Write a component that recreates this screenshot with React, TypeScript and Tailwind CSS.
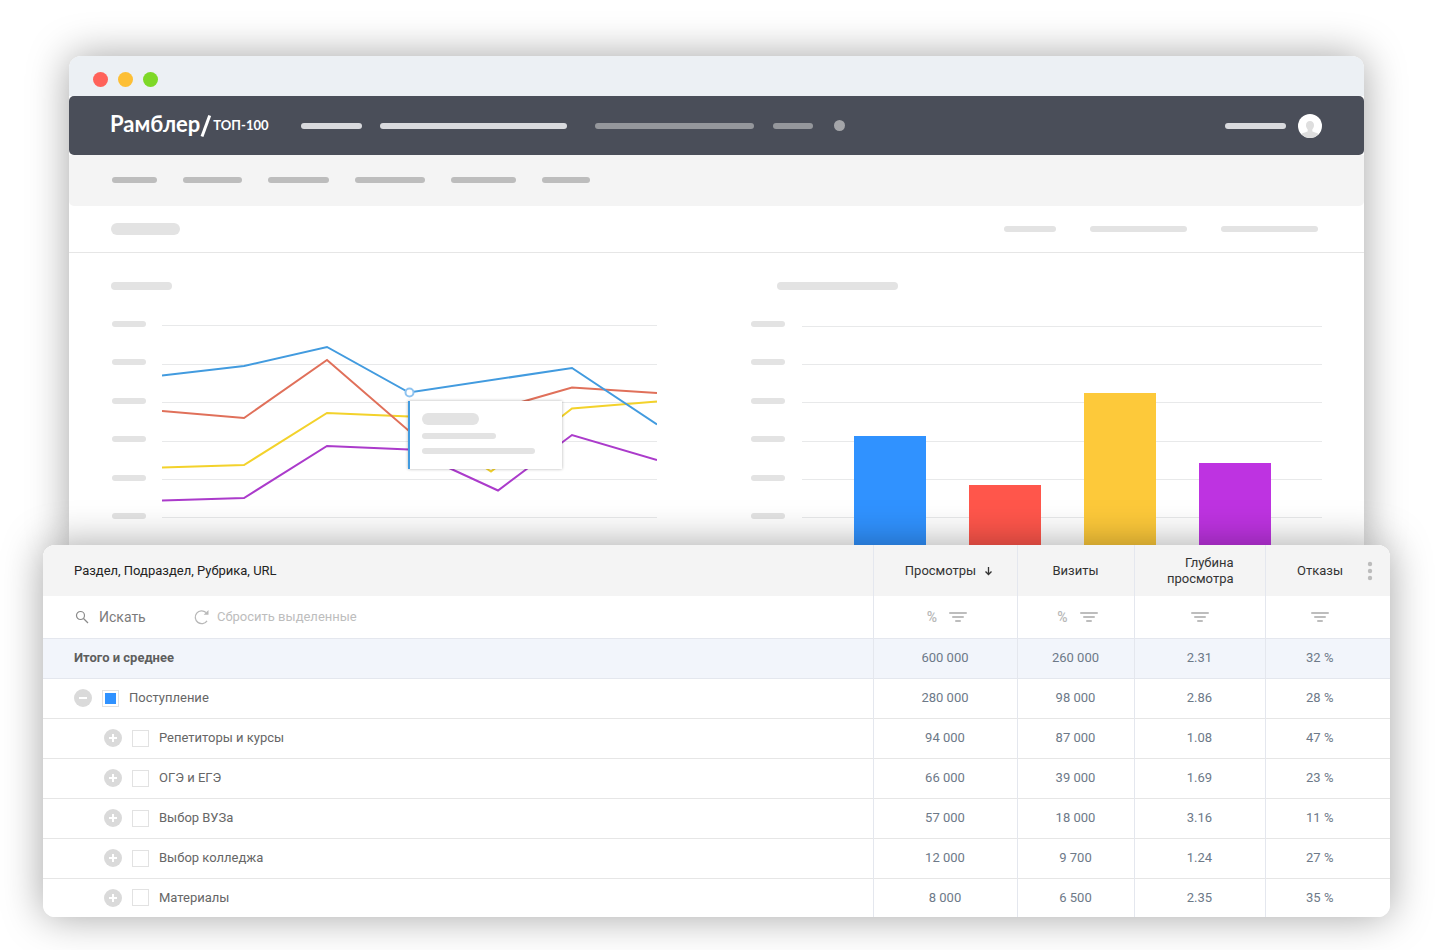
import { useState } from 'react';

const axisTicks = [0, 1, 2, 3, 4, 5];

const series = [
  { name: 'yellow', color: '#f3d22b', points: '0,142.5 82,140 165,88 247,91.5 329,146.5 410,83.5 495,76.5' },
  { name: 'red', color: '#e0705a', points: '0,86 82,93 165,35 247,106 335,84 410,62.5 495,68' },
  { name: 'purple', color: '#ab3bcb', points: '0,175.5 82,173 165,121 247,124.5 336,165.5 410,110 495,135' },
  { name: 'blue', color: '#429bdf', points: '0,50.5 82,41 165,22 247,67.5 410,43 495,99.5' },
];

const bars = [
  { x: 52, y: 111, color: '#3092ff' },
  { x: 167, y: 160, color: '#ff564b' },
  { x: 282, y: 68, color: '#fdc93a' },
  { x: 397, y: 138, color: '#be33e1' },
];

const rows = [
  { name: 'Поступление', values: ['280 000', '98 000', '2.86', '28 %'], parent: true },
  { name: 'Репетиторы и курсы', values: ['94 000', '87 000', '1.08', '47 %'], parent: false },
  { name: 'ОГЭ и ЕГЭ', values: ['66 000', '39 000', '1.69', '23 %'], parent: false },
  { name: 'Выбор ВУЗа', values: ['57 000', '18 000', '3.16', '11 %'], parent: false },
  { name: 'Выбор колледжа', values: ['12 000', '9 700', '1.24', '27 %'], parent: false },
  { name: 'Материалы', values: ['8 000', '6 500', '2.35', '35 %'], parent: false },
];

const totals = ['600 000', '260 000', '2.31', '32 %'];

function Bar({ className }: { className: string }) {
  return <span className={`block shrink-0 rounded-full ${className}`} />;
}

function AxisLabels() {
  return (
    <div className="flex h-[198px] w-[34px] shrink-0 flex-col justify-between">
      {axisTicks.map((tick) => (
        <Bar key={tick} className="h-1.5 w-full bg-[#e3e3e3]" />
      ))}
    </div>
  );
}

function GridLines({ width, top }: { width: number; top: number }) {
  const offsets = [top, 39, 77, 116, 154, 192];
  return (
    <g fill="#e8e9ea">
      {offsets.map((y) => (
        <rect key={y} x="0" y={y} width={width} height="1" />
      ))}
    </g>
  );
}

function LineChart() {
  return (
    <div>
      <Bar className="h-2 w-[61px] bg-[#e3e3e3]" />
      <div className="mt-[31px] flex gap-4 pl-px">
        <AxisLabels />
        <div className="relative mt-1 min-w-0 flex-1">
          <svg viewBox="0 0 495 220" preserveAspectRatio="none" className="block h-[220px] w-full">
            <GridLines width={495} top={0} />
            {series.map((line) => (
              <polyline key={line.name} points={line.points} fill="none" stroke={line.color} strokeWidth="2" />
            ))}
            <circle cx="247.5" cy="67.5" r="4" fill="#fff" stroke="#8ec3f0" strokeWidth="2" />
          </svg>
          {/* Tooltip of the highlighted point */}
          <div
            className="absolute top-[76px] flex h-[68px] w-[154px] flex-col border-l-2 border-[#429bdf] bg-white pt-3 pl-3 shadow-[0_0_3px_rgba(0,0,0,0.3)]"
            style={{ left: `${(246 / 495) * 100}%` }}
          >
            <Bar className="h-3 w-[57px] bg-[#e3e3e3]" />
            <Bar className="mt-2 h-1.5 w-[74px] bg-[#e3e3e3]" />
            <Bar className="mt-[9px] h-1.5 w-[113px] bg-[#e3e3e3]" />
          </div>
        </div>
      </div>
    </div>
  );
}

function BarChart() {
  return (
    <div>
      <Bar className="ml-[26px] h-2 w-[121px] bg-[#e3e3e3]" />
      <div className="mt-[31px] flex gap-[17px]">
        <AxisLabels />
        <svg viewBox="0 0 520 220" preserveAspectRatio="none" className="mt-1 block h-[220px] min-w-0 flex-1">
          <GridLines width={520} top={1} />
          {bars.map((bar) => (
            <rect key={bar.color} x={bar.x} y={bar.y} width="72" height={220 - bar.y} fill={bar.color} />
          ))}
        </svg>
      </div>
    </div>
  );
}

function FilterIcon() {
  return (
    <svg width="18" height="12" viewBox="0 0 18 12" fill="none" stroke="#bdbdbd" strokeWidth="2" strokeLinecap="round">
      <path d="M1 2h16M4 6h10M7 10h4" />
    </svg>
  );
}

function FilterControls({ percent }: { percent?: boolean }) {
  return (
    <div className={`flex items-center justify-center gap-3 ${percent ? 'pl-1' : ''}`}>
      {percent && (
        <button type="button" className="text-sm font-medium text-[#b8b8b8]">
          %
        </button>
      )}
      <button type="button" aria-label="Фильтр">
        <FilterIcon />
      </button>
    </div>
  );
}

function BrowserWindow() {
  return (
    <section className="mx-[26px] rounded-t-xl bg-white shadow-[0_0_40px_rgba(0,0,0,0.36)]">
      <div className="flex h-10 items-center gap-2.5 rounded-t-xl bg-[#ecf0f4] px-6 pt-1.5">
        <span className="size-[15px] rounded-full bg-[#ff625a]" />
        <span className="size-[15px] rounded-full bg-[#fdbf35]" />
        <span className="size-[15px] rounded-full bg-[#7ed827]" />
      </div>

      <header className="flex h-[59px] items-center rounded-[5px] bg-[#4a4e59] pr-[42px] pl-[41px]">
        <a href="#" className="flex w-[191px] shrink-0 items-center font-['Lato',sans-serif] text-white">
          <span className="pb-1 text-[22px] leading-6 font-bold">Рамблер</span>
          <svg width="12" height="22" viewBox="0 0 12 22" fill="none" stroke="#fff" strokeWidth="3">
            <path d="M9.700 .5 2 21.500" />
          </svg>
          <span className="ml-px text-[13px] font-bold">ТОП-100</span>
        </a>
        <nav className="flex items-center">
          <Bar className="h-1.5 w-[61px] bg-[#d9dade]" />
          <Bar className="ml-[18px] h-1.5 w-[187px] bg-[#d9dade]" />
          <Bar className="ml-7 h-1.5 w-[159px] bg-[#95979c]" />
          <Bar className="ml-[19px] h-1.5 w-10 bg-[#95979c]" />
          <Bar className="ml-[21px] size-[11px] bg-[#a4a5a9]" />
        </nav>
        <div className="ml-auto flex items-center gap-3">
          <Bar className="h-1.5 w-[61px] bg-[#d9dade]" />
          <svg width="24" height="24" viewBox="0 0 24 24">
            <circle cx="12" cy="12" r="12" fill="#fff" />
            <path
              d="M12 7c2.600 0 4 1.900 4 4.200 0 1.700-.7 3.200-1.700 4.200v1.900c0 .9 5 1.200 6.200 2.900A12 12 0 0 1 12 24a12 12 0 0 1-8.500-3.800c1.200-1.700 6.200-2 6.200-2.900v-1.900C8.700 14.400 8 12.900 8 11.200 8 8.900 9.400 7 12 7Z"
              fill="#dedede"
            />
          </svg>
        </div>
      </header>

      <div className="flex h-[51px] items-center gap-[26px] rounded-b-[5px] bg-[#f4f4f4] px-[43px] pb-px">
        <Bar className="h-1.5 w-[45px] bg-[#bdbdbd]" />
        <Bar className="h-1.5 w-[59px] bg-[#bdbdbd]" />
        <Bar className="h-1.5 w-[61px] bg-[#bdbdbd]" />
        <Bar className="h-1.5 w-[70px] bg-[#bdbdbd]" />
        <Bar className="h-1.5 w-[65px] bg-[#bdbdbd]" />
        <Bar className="h-1.5 w-12 bg-[#bdbdbd]" />
      </div>

      <div className="flex h-[47px] items-center gap-[34px] border-b border-[#e6e6e6] pr-[46px] pl-[42px]">
        <Bar className="mr-auto h-3 w-[69px] bg-[#e3e3e3]" />
        <Bar className="h-1.5 w-[52px] bg-[#e3e3e3]" />
        <Bar className="h-1.5 w-[97px] bg-[#e3e3e3]" />
        <Bar className="h-1.5 w-[97px] bg-[#e3e3e3]" />
      </div>

      <div className="grid grid-cols-[546fr_571fr] gap-[94px] px-[42px] pt-[29px]">
        <LineChart />
        <BarChart />
      </div>
    </section>
  );
}

function StatsTable() {
  const [selected, setSelected] = useState<string[]>(['Поступление']);

  const toggle = (name: string) => {
    setSelected((prev) => (prev.includes(name) ? prev.filter((item) => item !== name) : [...prev, name]));
  };

  return (
    <section className="relative overflow-hidden rounded-xl bg-white">
      <table className="w-full table-fixed border-collapse text-[13px] leading-4 text-[#6d7988]">
        <colgroup>
          <col />
          <col className="w-36" />
          <col className="w-[117px]" />
          <col className="w-[131px]" />
          <col className="w-[125px]" />
        </colgroup>
        <thead>
          <tr className="h-[51px] bg-[#f4f4f4] text-[#333]">
            <th className="pl-[31px] text-left font-normal text-[#222]">Раздел, Подраздел, Рубрика, URL</th>
            <th className="border-l border-[#e4e7ee] font-normal">
              <button type="button" className="inline-flex items-center gap-2 pl-2">
                Просмотры
                <svg width="9" height="10" viewBox="0 0 9 10" fill="none" stroke="#333" strokeWidth="1.3">
                  <path d="M4.500 1v7M1.500 5.500l3 3 3-3" />
                </svg>
              </button>
            </th>
            <th className="border-l border-[#e4e7ee] font-normal">Визиты</th>
            <th className="border-l border-[#e4e7ee] pr-[31px] text-right font-normal">
              Глубина
              <br />
              просмотра
            </th>
            <th className="border-l border-[#e4e7ee] font-normal">
              <div className="flex items-center justify-end gap-6 pr-[17px]">
                Отказы
                <button type="button" aria-label="Настройки">
                  <svg width="6" height="20" viewBox="0 0 6 20" fill="#bcbcbc">
                    <circle cx="3" cy="3" r="2.200" />
                    <circle cx="3" cy="10" r="2.200" />
                    <circle cx="3" cy="17" r="2.200" />
                  </svg>
                </button>
              </div>
            </th>
          </tr>
          <tr className="h-[42px] border-b border-[#e4e7ee]">
            <td className="pl-8">
              <div className="flex items-center">
                <label htmlFor="search" aria-label="Искать">
                  <svg width="14" height="14" viewBox="0 0 14 14" fill="none" stroke="#8a8a8a" strokeWidth="1.200">
                    <circle cx="5.500" cy="5.500" r="4" />
                    <path d="m8.500 8.500 4.500 4.500" />
                  </svg>
                </label>
                <input
                  id="search"
                  type="text"
                  placeholder="Искать"
                  className="ml-2.5 w-[95px] text-sm outline-none placeholder:text-[#7b7b7b]"
                />
                <button type="button" className="flex items-center gap-[7px] text-[#bdbdbd]">
                  <svg width="16" height="16" viewBox="0 0 16 16" fill="none" stroke="#b8b8b8" strokeWidth="1.300">
                    <path d="M13 11.800A6.400 6.400 0 1 1 12 3.500" />
                    <path d="M14.500 1v4.800H9.700Z" fill="#b8b8b8" stroke="none" />
                  </svg>
                  Сбросить выделенные
                </button>
              </div>
            </td>
            <td className="border-l border-[#e4e7ee]">
              <FilterControls percent />
            </td>
            <td className="border-l border-[#e4e7ee]">
              <FilterControls percent />
            </td>
            <td className="border-l border-[#e4e7ee]">
              <FilterControls />
            </td>
            <td className="border-l border-[#e4e7ee] pr-4">
              <FilterControls />
            </td>
          </tr>
        </thead>
        <tbody>
          <tr className="h-10 border-b border-[#e4e7ee] bg-[#f2f5fb]">
            <th className="pl-[31px] text-left font-bold text-[#5e5e5e]">Итого и среднее</th>
            {totals.map((value) => (
              <td key={value} className="border-l border-[#e4e7ee] text-center last:pr-4">
                {value}
              </td>
            ))}
          </tr>
          {rows.map((row) => (
            <tr key={row.name} className="h-10 border-b border-[#e6e6e6] last:h-[39px] last:border-b-0">
              <td className={row.parent ? 'pl-[31px]' : 'pl-[61px]'}>
                <div className="flex items-center gap-2.5">
                  <button
                    type="button"
                    aria-label={row.parent ? 'Свернуть' : 'Развернуть'}
                    className="flex size-[18px] items-center justify-center rounded-full bg-[#dadada]"
                  >
                    <svg width="10" height="10" viewBox="0 0 10 10" stroke="#fff" strokeWidth="2">
                      <path d={row.parent ? 'M1 5h8' : 'M1 5h8M5 1v8'} />
                    </svg>
                  </button>
                  <label className="flex items-center gap-2.5 text-[#666]">
                    <input
                      type="checkbox"
                      checked={selected.includes(row.name)}
                      onChange={() => toggle(row.name)}
                      className="size-[17px] appearance-none border border-[#e2e2e2] bg-white bg-clip-content p-0.5 checked:bg-[#3092ff]"
                    />
                    {row.name}
                  </label>
                </div>
              </td>
              {row.values.map((value) => (
                <td key={value} className="border-l border-[#e4e7ee] text-center last:pr-4">
                  {value}
                </td>
              ))}
            </tr>
          ))}
        </tbody>
      </table>
    </section>
  );
}

export default function App() {
  return (
    <main className="min-h-screen overflow-hidden bg-white pt-14 pr-[50px] pb-8 pl-[43px] font-['Roboto',sans-serif]">
      <BrowserWindow />
      <div className="relative rounded-xl shadow-[0_0_40px_rgba(0,0,0,0.36)]">
        <StatsTable />
      </div>
    </main>
  );
}
